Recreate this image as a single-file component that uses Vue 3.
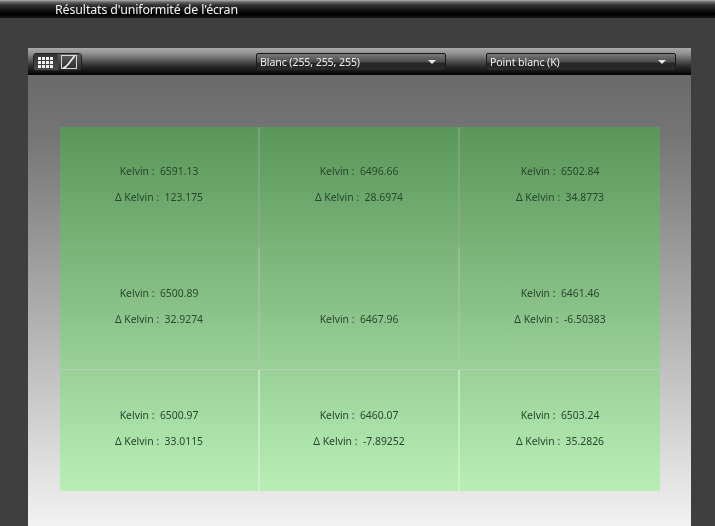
<script setup>
const cells = [
  { k: '6591.13', d: '123.175' },
  { k: '6496.66', d: '28.6974' },
  { k: '6502.84', d: '34.8773' },
  { k: '6500.89', d: '32.9274' },
  { k: '6467.96', d: null },
  { k: '6461.46', d: '-6.50383' },
  { k: '6500.97', d: '33.0115' },
  { k: '6460.07', d: '-7.89252' },
  { k: '6503.24', d: '35.2826' }
]
</script>

<template>
  <div class="page">
    <header class="topbar"><span class="title">Résultats d'uniformité de l'écran</span></header>
    <section class="panel">
      <div class="toolbar">
        <div class="toggle">
          <button class="tbtn active" aria-label="Grille">
            <svg width="15" height="11" viewBox="0 0 15 11">
              <path fill="#f2f2f2" d="M0 0h3v3H0zM4 0h3v3H4zM8 0h3v3H8zM12 0h3v3h-3zM0 4h3v3H0zM4 4h3v3H4zM8 4h3v3H8zM12 4h3v3h-3zM0 8h3v3H0zM4 8h3v3H4zM8 8h3v3H8zM12 8h3v3h-3z"/>
            </svg>
          </button>
          <button class="tbtn" aria-label="Courbe">
            <svg width="16" height="14" viewBox="0 0 16 14">
              <rect x="0.5" y="0.5" width="15" height="13" fill="none" stroke="#d8d8d8"/>
              <path d="M2 13C4.5 12.5 5.5 11.5 7 9.5L13.5 1" stroke="#f2f2f2" stroke-width="1.6" fill="none"/>
            </svg>
          </button>
        </div>
        <div class="select first"><span>Blanc (255, 255, 255)</span><i class="arrow"></i></div>
        <div class="select second"><span>Point blanc (K)</span><i class="arrow"></i></div>
      </div>
      <div class="content">
        <div class="grid">
          <div v-for="c in cells" :key="c.k" class="cell">
            <p>{{ c.d ? 'Kelvin :\u00a0 ' + c.k : '\u00a0' }}</p>
            <p>{{ c.d ? 'Δ Kelvin :\u00a0 ' + c.d : 'Kelvin :\u00a0 ' + c.k }}</p>
          </div>
        </div>
      </div>
    </section>
  </div>
</template>

<style>
html, body { margin: 0; background: #3f3f3f; overflow: hidden; }
</style>

<style scoped>
.page {
  width: 715px;
  height: 526px;
  overflow: hidden;
  background: #3f3f3f;
  display: flex;
  flex-direction: column;
  filter: blur(0.35px);
}
.topbar {
  height: 18px;
  flex: none;
  background: linear-gradient(#b0b0b0 0, #6a6a6a 2px, #343434 5px, #141414 10px, #000 14px, #161616 18px);
  padding-left: 55px;
  box-sizing: border-box;
}
.title {
  color: #f4f4f4;
  font: 12.4px/20px "Noto Sans", sans-serif;
  letter-spacing: -0.12px;
  white-space: nowrap;
}
.panel {
  margin: 30px 24px 0 28px;
  flex: 1;
  display: flex;
  flex-direction: column;
}
.toolbar {
  height: 27px;
  flex: none;
  box-sizing: border-box;
  display: flex;
  align-items: flex-start;
  padding: 5px 15px 0 5px;
  background: linear-gradient(#aaaaaa 0, #8e8e8e 6px, #5c5c5c 12px, #2c2c2c 18px, #111 24px, #000 27px);
}
.toggle {
  display: flex;
  height: 18px;
  border: 1px solid #222;
  border-radius: 3px;
  overflow: hidden;
  box-sizing: border-box;
  flex: none;
  width: 49px;
}
.tbtn {
  flex: 1;
  padding: 0;
  border: 0;
  display: flex;
  align-items: center;
  justify-content: center;
  background: linear-gradient(#5c5c5c, #2a2a2a);
}
.tbtn.active { background: linear-gradient(#343434, #4a4a4a); }
.select {
  height: 18px;
  box-sizing: border-box;
  border: 1px solid #1a1a1a;
  border-radius: 2px;
  display: flex;
  align-items: center;
  justify-content: space-between;
  padding: 0 9px 0 3px;
  background: linear-gradient(#787878 0, #4c4c4c 8px, #262626 9px, #2a2a2a 100%);
  color: #eee;
  font: 10.6px/14px "Noto Sans", sans-serif;
  letter-spacing: -0.1px;
  width: 190px;
  flex: none;
}
.first { margin-left: 174px; }
.second { margin-left: 40px; }
.arrow {
  width: 0;
  height: 0;
  border-left: 4px solid transparent;
  border-right: 4px solid transparent;
  border-top: 4px solid #e8e8e8;
}
.content {
  flex: 1;
  padding: 52px 31px 35px 32px;
  background: linear-gradient(#6a6a6a 0, #757575 60px, #f2f2f2 100%);
}
.grid {
  display: grid;
  grid-template-columns: repeat(3, 200px);
  grid-template-rows: 121px 122px 121px;
  height: 364px;
  width: 600px;
  background: linear-gradient(#5a965a, #b9efb7);
}
.cell {
  box-sizing: border-box;
  display: flex;
  flex-direction: column;
  align-items: center;
  justify-content: center;
  gap: 12px;
  border-right: 2px solid rgba(160, 170, 160, 0.45);
  border-bottom: 1px solid rgba(190, 180, 180, 0.14);
  padding-bottom: 6px;
}
.cell:nth-child(n + 4) {
  border-right-color: rgba(185, 195, 185, 0.45);
  border-bottom-color: rgba(205, 205, 195, 0.55);
}
.cell:nth-child(n + 7) {
  border-right-color: rgba(225, 240, 225, 0.55);
  border-bottom: 0;
}
.cell:nth-child(3n) { border-right: 0; }
.cell p {
  margin: 0;
  color: #2a452e;
  font: 10.4px/14px "Noto Sans", sans-serif;
  white-space: nowrap;
}
</style>
